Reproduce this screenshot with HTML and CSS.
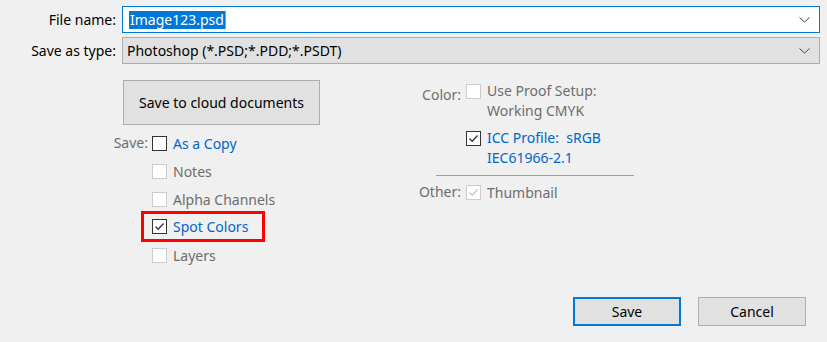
FILE: index.html
```html
<!DOCTYPE html>
<html lang="en">
<head>
    <meta charset="UTF-8">
    <title>Save As</title>
    <link rel="stylesheet" href="styles.css">
</head>
<body>
    <div class="dialog">
        <div class="fields">
            <label class="field-label">File name:</label>
            <div class="combo combo-edit">
                <span class="sel">Image123.psd</span>
                <svg class="chev" width="11" height="6" viewBox="0 0 11 6"><polyline points="0.5,0.5 5.5,5 10.5,0.5" fill="none" stroke="#444" stroke-width="1"/></svg>
            </div>
            <label class="field-label">Save as type:</label>
            <div class="combo combo-list">
                <span>Photoshop (*.PSD;*.PDD;*.PSDT)</span>
                <svg class="chev" width="11" height="6" viewBox="0 0 11 6"><polyline points="0.5,0.5 5.5,5 10.5,0.5" fill="none" stroke="#444" stroke-width="1"/></svg>
            </div>
        </div>

        <div class="options">
            <div class="col-left">
                <button class="btn btn-cloud">Save to cloud documents</button>
                <div class="group">
                    <span class="group-label">Save:</span>
                    <div class="checks">
                        <div class="check"><span class="box"></span><span class="blue">As a Copy</span></div>
                        <div class="check off"><span class="box"></span><span>Notes</span></div>
                        <div class="check off"><span class="box"></span><span>Alpha Channels</span></div>
                        <div class="check hl">
                            <span class="box"><svg width="13" height="13" viewBox="0 0 13 13"><polyline points="2.5,6.5 5.2,9.2 10.5,3.5" fill="none" stroke="#333" stroke-width="1.3"/></svg></span>
                            <span class="blue">Spot Colors</span>
                        </div>
                        <div class="check off"><span class="box"></span><span>Layers</span></div>
                    </div>
                </div>
            </div>

            <div class="col-right">
                <div class="group">
                    <span class="group-label">Color:</span>
                    <div class="checks">
                        <div class="check multi off"><span class="box"></span><span>Use Proof Setup:<br>Working CMYK</span></div>
                        <div class="check multi icc">
                            <span class="box"><svg width="13" height="13" viewBox="0 0 13 13"><polyline points="2.5,6.5 5.2,9.2 10.5,3.5" fill="none" stroke="#333" stroke-width="1.3"/></svg></span>
                            <span class="blue">ICC Profile:&nbsp; sRGB<br>IEC61966-2.1</span>
                        </div>
                    </div>
                </div>
                <div class="sep"></div>
                <div class="group">
                    <span class="group-label">Other:</span>
                    <div class="checks">
                        <div class="check off">
                            <span class="box"><svg width="13" height="13" viewBox="0 0 13 13"><polyline points="2.5,6.5 5.2,9.2 10.5,3.5" fill="none" stroke="#c8c8c8" stroke-width="1.3"/></svg></span>
                            <span>Thumbnail</span>
                        </div>
                    </div>
                </div>
            </div>
        </div>

        <div class="actions">
            <button class="btn btn-default">Save</button>
            <button class="btn">Cancel</button>
        </div>
    </div>
</body>
</html>
```

FILE: styles.css
```css
body {
    margin: 0;
    background-color: #f0f0f0;
    font-family: "Noto Sans", "Open Sans", sans-serif;
    font-size: 14px;
    color: #000;
}

.dialog {
    height: 342px;
    box-sizing: border-box;
    display: flex;
    flex-direction: column;
}

/* file name / type rows */
.fields {
    display: grid;
    grid-template-columns: 116px 1fr;
    column-gap: 6px;
    row-gap: 4px;
    padding: 6px 7px 0 0;
}

.field-label {
    text-align: right;
    line-height: 27px;
}

.combo {
    height: 27px;
    box-sizing: border-box;
    display: flex;
    align-items: center;
    justify-content: space-between;
    padding: 0 9px 0 4px;
}

.combo-edit {
    background-color: #fff;
    border: 1px solid #0078d7;
    padding-left: 6px;
}

.combo-list {
    background-color: #e1e1e1;
    border: 1px solid #adadad;
}

.sel {
    background-color: #0078d7;
    color: #fff;
    line-height: 18px;
    padding: 0 1px;
    border-right: 1px solid #ff8c00;
}

/* options area */
.options {
    display: flex;
    margin-top: 16px;
}

.col-left {
    width: 290px;
    padding-left: 110px;
}

.col-right {
    padding-top: 1px;
}

.btn {
    font-family: inherit;
    font-size: 14px;
    color: #000;
    background-color: #e1e1e1;
    border: 1px solid #adadad;
    padding: 0;
    width: 108px;
    height: 29px;
}

.btn-cloud {
    margin-left: 13px;
    width: 197px;
    height: 45px;
}

.btn-default {
    border: 2px solid #0078d7;
}

.group {
    display: flex;
    gap: 4px;
    margin-top: 4px;
}

.col-left .group-label {
    width: 38px;
}

.col-right .group {
    margin-top: 0;
    gap: 5px;
}

.col-right .group-label {
    width: 61px;
}

.group-label {
    text-align: right;
    color: #6d6d6d;
    line-height: 28px;
}

.check {
    display: flex;
    align-items: center;
    gap: 6px;
    height: 28px;
}

.check.multi {
    height: auto;
    align-items: flex-start;
    line-height: 20px;
}

.check.multi .box {
    margin-top: 3px;
}

.check.icc {
    margin-top: 7px;
}

.box {
    width: 15px;
    height: 15px;
    box-sizing: border-box;
    border: 1px solid #333;
    background-color: #fff;
    display: flex;
    align-items: center;
    justify-content: center;
    flex-shrink: 0;
}

.off {
    color: #6d6d6d;
}

.off .box {
    border-color: #cccccc;
}

.blue {
    color: #0066cc;
}

/* red highlight around Spot Colors */
.hl {
    width: fit-content;
    height: 25px;
    border: 3px solid #ff0000;
    margin: -2px 0 -1px -11px;
    padding: 0 14px 0 8px;
}

.sep {
    width: 198px;
    height: 1px;
    background-color: #a0a0a0;
    margin: 7px 0 2px 36px;
}

.actions {
    margin-top: auto;
    display: flex;
    justify-content: flex-end;
    gap: 17px;
    padding: 0 21px 16px 0;
}
```
